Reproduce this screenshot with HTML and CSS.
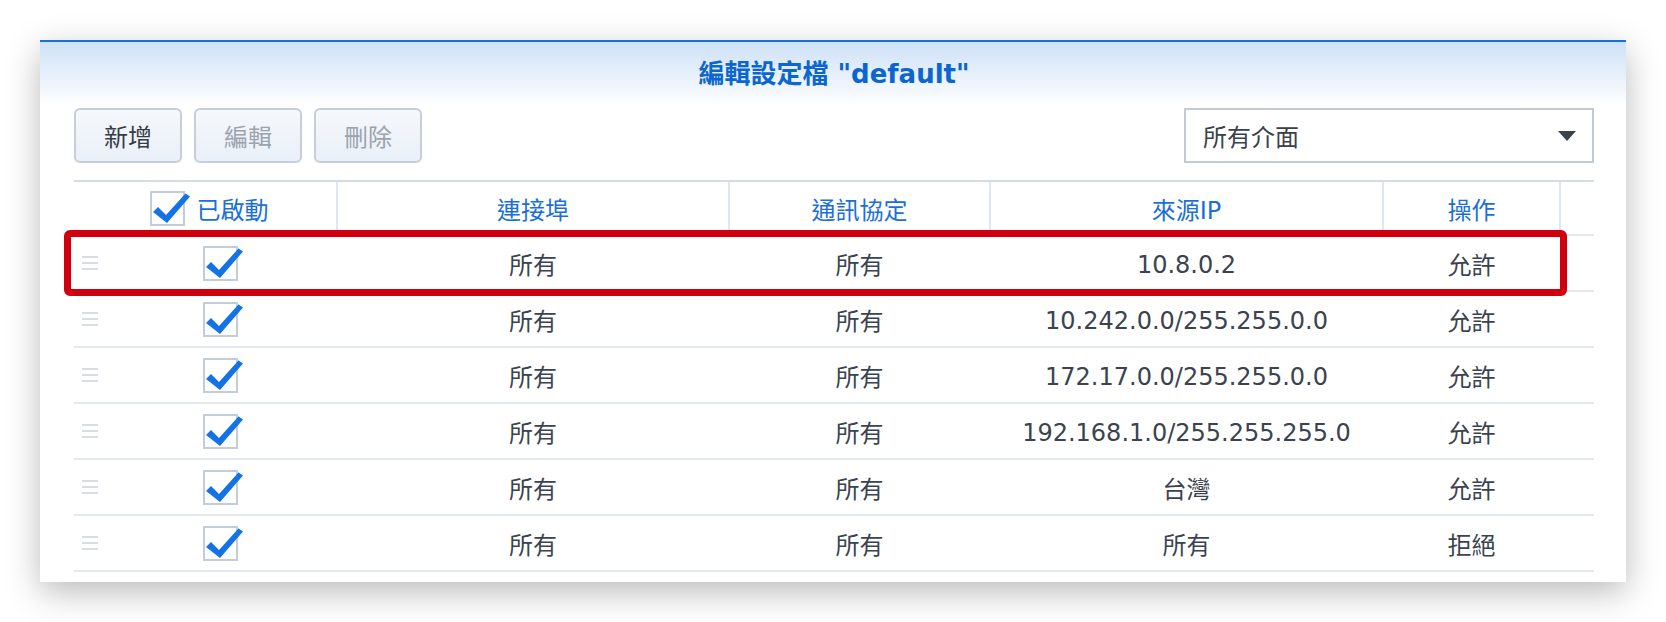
FILE: index.html
```html
<!DOCTYPE html>
<html lang="zh-Hant">
<head>
<meta charset="utf-8">
<title>編輯設定檔</title>
<link rel="stylesheet" href="styles.css">
</head>
<body>
<div class="panel">
  <div class="title">編輯設定檔 "default"</div>
  <div class="toolbar">
    <div class="btn">新增</div>
    <div class="btn disabled">編輯</div>
    <div class="btn disabled">刪除</div>
    <div class="select">
      <span>所有介面</span>
      <span class="arrow"></span>
    </div>
  </div>
  <div class="table">
    <div class="thead">
      <div class="th th-first">
        <span class="cb"><svg class="check" viewBox="0 0 44 36"><path d="M3,21 L8,16 L16,24 L35.5,2.5 L40,5.5 L17,32 Z"/></svg></span>
        <span class="th-label">已啟動</span>
      </div>
      <div class="th">連接埠</div>
      <div class="th">通訊協定</div>
      <div class="th">來源IP</div>
      <div class="th">操作</div>
      <div class="th"></div>
    </div>

    <div class="row">
      <div class="td handle-cell"><span class="handle"><i></i><i></i><i></i></span></div>
      <div class="td"><span class="cb"><svg class="check" viewBox="0 0 44 36"><path d="M3,21 L8,16 L16,24 L35.5,2.5 L40,5.5 L17,32 Z"/></svg></span></div>
      <div class="td">所有</div>
      <div class="td">所有</div>
      <div class="td"><span class="ip">10.8.0.2</span></div>
      <div class="td">允許</div>
      <div class="td"></div>
    </div>
    <div class="row">
      <div class="td handle-cell"><span class="handle"><i></i><i></i><i></i></span></div>
      <div class="td"><span class="cb"><svg class="check" viewBox="0 0 44 36"><path d="M3,21 L8,16 L16,24 L35.5,2.5 L40,5.5 L17,32 Z"/></svg></span></div>
      <div class="td">所有</div>
      <div class="td">所有</div>
      <div class="td"><span class="ip">10.242.0.0/255.255.0.0</span></div>
      <div class="td">允許</div>
      <div class="td"></div>
    </div>
    <div class="row">
      <div class="td handle-cell"><span class="handle"><i></i><i></i><i></i></span></div>
      <div class="td"><span class="cb"><svg class="check" viewBox="0 0 44 36"><path d="M3,21 L8,16 L16,24 L35.5,2.5 L40,5.5 L17,32 Z"/></svg></span></div>
      <div class="td">所有</div>
      <div class="td">所有</div>
      <div class="td"><span class="ip">172.17.0.0/255.255.0.0</span></div>
      <div class="td">允許</div>
      <div class="td"></div>
    </div>
    <div class="row">
      <div class="td handle-cell"><span class="handle"><i></i><i></i><i></i></span></div>
      <div class="td"><span class="cb"><svg class="check" viewBox="0 0 44 36"><path d="M3,21 L8,16 L16,24 L35.5,2.5 L40,5.5 L17,32 Z"/></svg></span></div>
      <div class="td">所有</div>
      <div class="td">所有</div>
      <div class="td"><span class="ip">192.168.1.0/255.255.255.0</span></div>
      <div class="td">允許</div>
      <div class="td"></div>
    </div>
    <div class="row">
      <div class="td handle-cell"><span class="handle"><i></i><i></i><i></i></span></div>
      <div class="td"><span class="cb"><svg class="check" viewBox="0 0 44 36"><path d="M3,21 L8,16 L16,24 L35.5,2.5 L40,5.5 L17,32 Z"/></svg></span></div>
      <div class="td">所有</div>
      <div class="td">所有</div>
      <div class="td">台灣</div>
      <div class="td">允許</div>
      <div class="td"></div>
    </div>
    <div class="row">
      <div class="td handle-cell"><span class="handle"><i></i><i></i><i></i></span></div>
      <div class="td"><span class="cb"><svg class="check" viewBox="0 0 44 36"><path d="M3,21 L8,16 L16,24 L35.5,2.5 L40,5.5 L17,32 Z"/></svg></span></div>
      <div class="td">所有</div>
      <div class="td">所有</div>
      <div class="td">所有</div>
      <div class="td">拒絕</div>
      <div class="td"></div>
    </div>

    <div class="highlight"></div>
  </div>
</div>
</body>
</html>
```

FILE: styles.css
```css
html, body {
  margin: 0;
  padding: 0;
  background: #ffffff;
}

body {
  font-family: "DejaVu Sans", "Noto Sans CJK TC", sans-serif;
  width: 1666px;
  height: 622px;
  overflow: hidden;
}

.panel {
  margin: 40px 0 0 40px;
  width: 1586px;
  height: 542px;
  box-sizing: border-box;
  border-top: 2px solid #1670dc;
  background: linear-gradient(#cde1f6 0px, #e6f0fb 32px, #ffffff 64px);
  box-shadow: 0 10px 32px rgba(0, 0, 0, 0.27);
  padding: 0 32px 10px 34px;
}

.title {
  height: 62px;
  padding-bottom: 3px;
  box-sizing: border-box;
  display: flex;
  align-items: center;
  justify-content: center;
  font-size: 26px;
  font-weight: bold;
  color: #0b66d0;
}

.toolbar {
  height: 59px;
  padding-top: 4px;
  box-sizing: border-box;
  display: flex;
  align-items: center;
  gap: 12px;
}

.btn {
  width: 108px;
  height: 55px;
  box-sizing: border-box;
  border: 2px solid #c5ced9;
  border-radius: 6px;
  background: linear-gradient(#f5f8fc, #eaf0f8);
  display: flex;
  align-items: center;
  justify-content: center;
  font-size: 24px;
  color: #343c47;
}

.btn.disabled {
  color: #9aa3ae;
}

.select {
  margin-left: auto;
  width: 410px;
  height: 55px;
  box-sizing: border-box;
  border: 2px solid #c1cbd6;
  background: #ffffff;
  display: flex;
  align-items: center;
  padding: 0 16px 0 17px;
  font-size: 24px;
  color: #3a414b;
}

.arrow {
  margin-left: auto;
  width: 0;
  height: 0;
  border-left: 9.5px solid transparent;
  border-right: 9.5px solid transparent;
  border-top: 10px solid #3b424c;
}

.table {
  position: relative;
  margin-top: 17px;
}

.thead {
  display: grid;
  grid-template-columns: 264px 392px 261px 393px 177px 33px;
  height: 56px;
  box-sizing: border-box;
  border-top: 2px solid #d4dce6;
  border-bottom: 2px solid #e3e9f1;
}

.th {
  display: flex;
  align-items: center;
  justify-content: center;
  gap: 14px;
  border-right: 2px solid #dfe8f2;
  font-size: 24px;
  color: #1a6fd8;
}

.th-first {
  gap: 12px;
  padding-left: 8px;
}

.th:last-child {
  border-right: none;
}

.row {
  display: grid;
  grid-template-columns: 36px 227px 392px 261px 393px 177px 34px;
  height: 56px;
  box-sizing: border-box;
  border-bottom: 2px solid #e4e9f1;
}

.td {
  display: flex;
  align-items: center;
  justify-content: center;
  font-size: 24px;
  color: #3b4350;
}

.ip {
  padding-top: 4px;
}

.handle-cell {
  justify-content: flex-start;
  padding-left: 8px;
}

.handle {
  width: 16px;
  height: 14px;
  display: flex;
  flex-direction: column;
  justify-content: space-between;
}

.handle i {
  display: block;
  height: 2px;
  background: #d6dde6;
}

.cb {
  position: relative;
  display: block;
  width: 35px;
  height: 35px;
  box-sizing: border-box;
  border: 2px solid #c3cdd9;
  background: #ffffff;
  flex: none;
}

.row .cb {
  margin-right: 6px;
}

.check {
  position: absolute;
  left: -2px;
  top: -2px;
  width: 44px;
  height: 36px;
  overflow: visible;
}

.check path {
  fill: #1272e6;
}

.highlight {
  position: absolute;
  left: -10px;
  top: 50px;
  width: 1503px;
  height: 66px;
  box-sizing: border-box;
  border: 7px solid #d0000f;
  border-radius: 6px;
  pointer-events: none;
}
```
